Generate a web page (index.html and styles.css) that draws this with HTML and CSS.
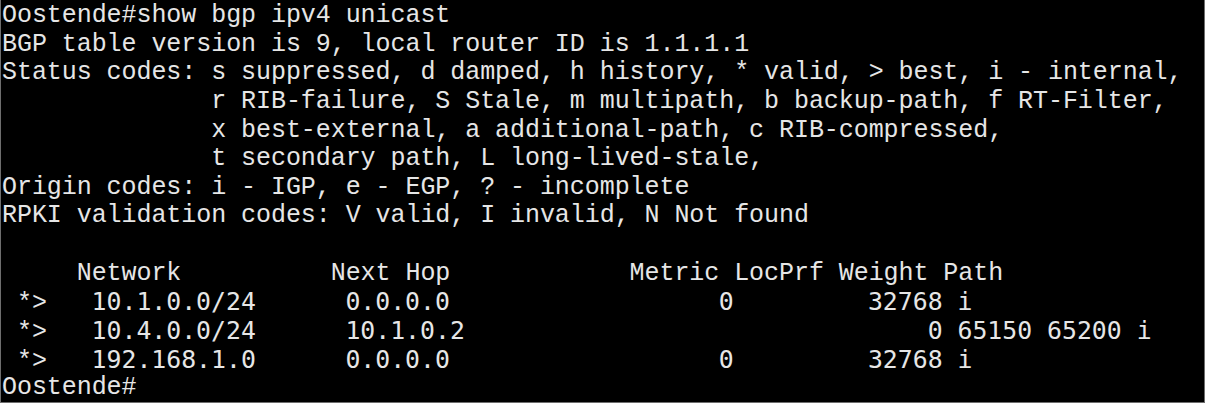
FILE: index.html
```html
<!DOCTYPE html>
<html>
<head>
<meta charset="utf-8">
<link rel="stylesheet" href="styles.css">
</head>
<body>
<div class="term">
<div class="ln">Oostende#show bgp ipv4 unicast</div>
<div class="ln">BGP table version is 9, local router ID is 1.1.1.1</div>
<div class="ln">Status codes: s suppressed, d damped, h history, * valid, &gt; best, i - internal,</div>
<div class="ln">              r RIB-failure, S Stale, m multipath, b backup-path, f RT-Filter,</div>
<div class="ln">              x best-external, a additional-path, c RIB-compressed,</div>
<div class="ln">              t secondary path, L long-lived-stale,</div>
<div class="ln">Origin codes: i - IGP, e - EGP, ? - incomplete</div>
<div class="ln">RPKI validation codes: V valid, I invalid, N Not found</div>
<div class="ln"> </div>
<div class="ln">     Network          Next Hop            Metric LocPrf Weight Path</div>
<div class="ln"> *&gt;<span class="alt">   10.1.0.0/24      0.0.0.0                  0         32768 i</span></div>
<div class="ln"> *&gt;<span class="alt">   10.4.0.0/24      10.1.0.2                               0 65150 65200 i</span></div>
<div class="ln"> *&gt;<span class="alt">   192.168.1.0      0.0.0.0                  0         32768 i</span></div>
<div class="ln">Oostende#</div>
</div>
</body>
</html>
```
FILE: styles.css
```css
html, body {
  margin: 0;
  padding: 0;
  background: #ffffff;
}
.term {
  box-sizing: border-box;
  width: 1205px;
  height: 403px;
  background: #000000;
  border-left: 1px solid #6e6e6e;
  border-right: 1px solid #6e6e6e;
  border-bottom: 1px solid #6e6e6e;
  padding-left: 1px;
  padding-top: 2px;
  color: #e6e6e6;
  font-family: "Liberation Mono", "Courier New", monospace;
  font-size: 25px;
  letter-spacing: -0.06px;
  line-height: 28.65px;
}
.ln {
  white-space: pre;
  height: 28.65px;
}
.alt {
  font-family: "DejaVu Sans Mono", monospace;
  font-size: 24.8px;
  letter-spacing: 0;
}
```
